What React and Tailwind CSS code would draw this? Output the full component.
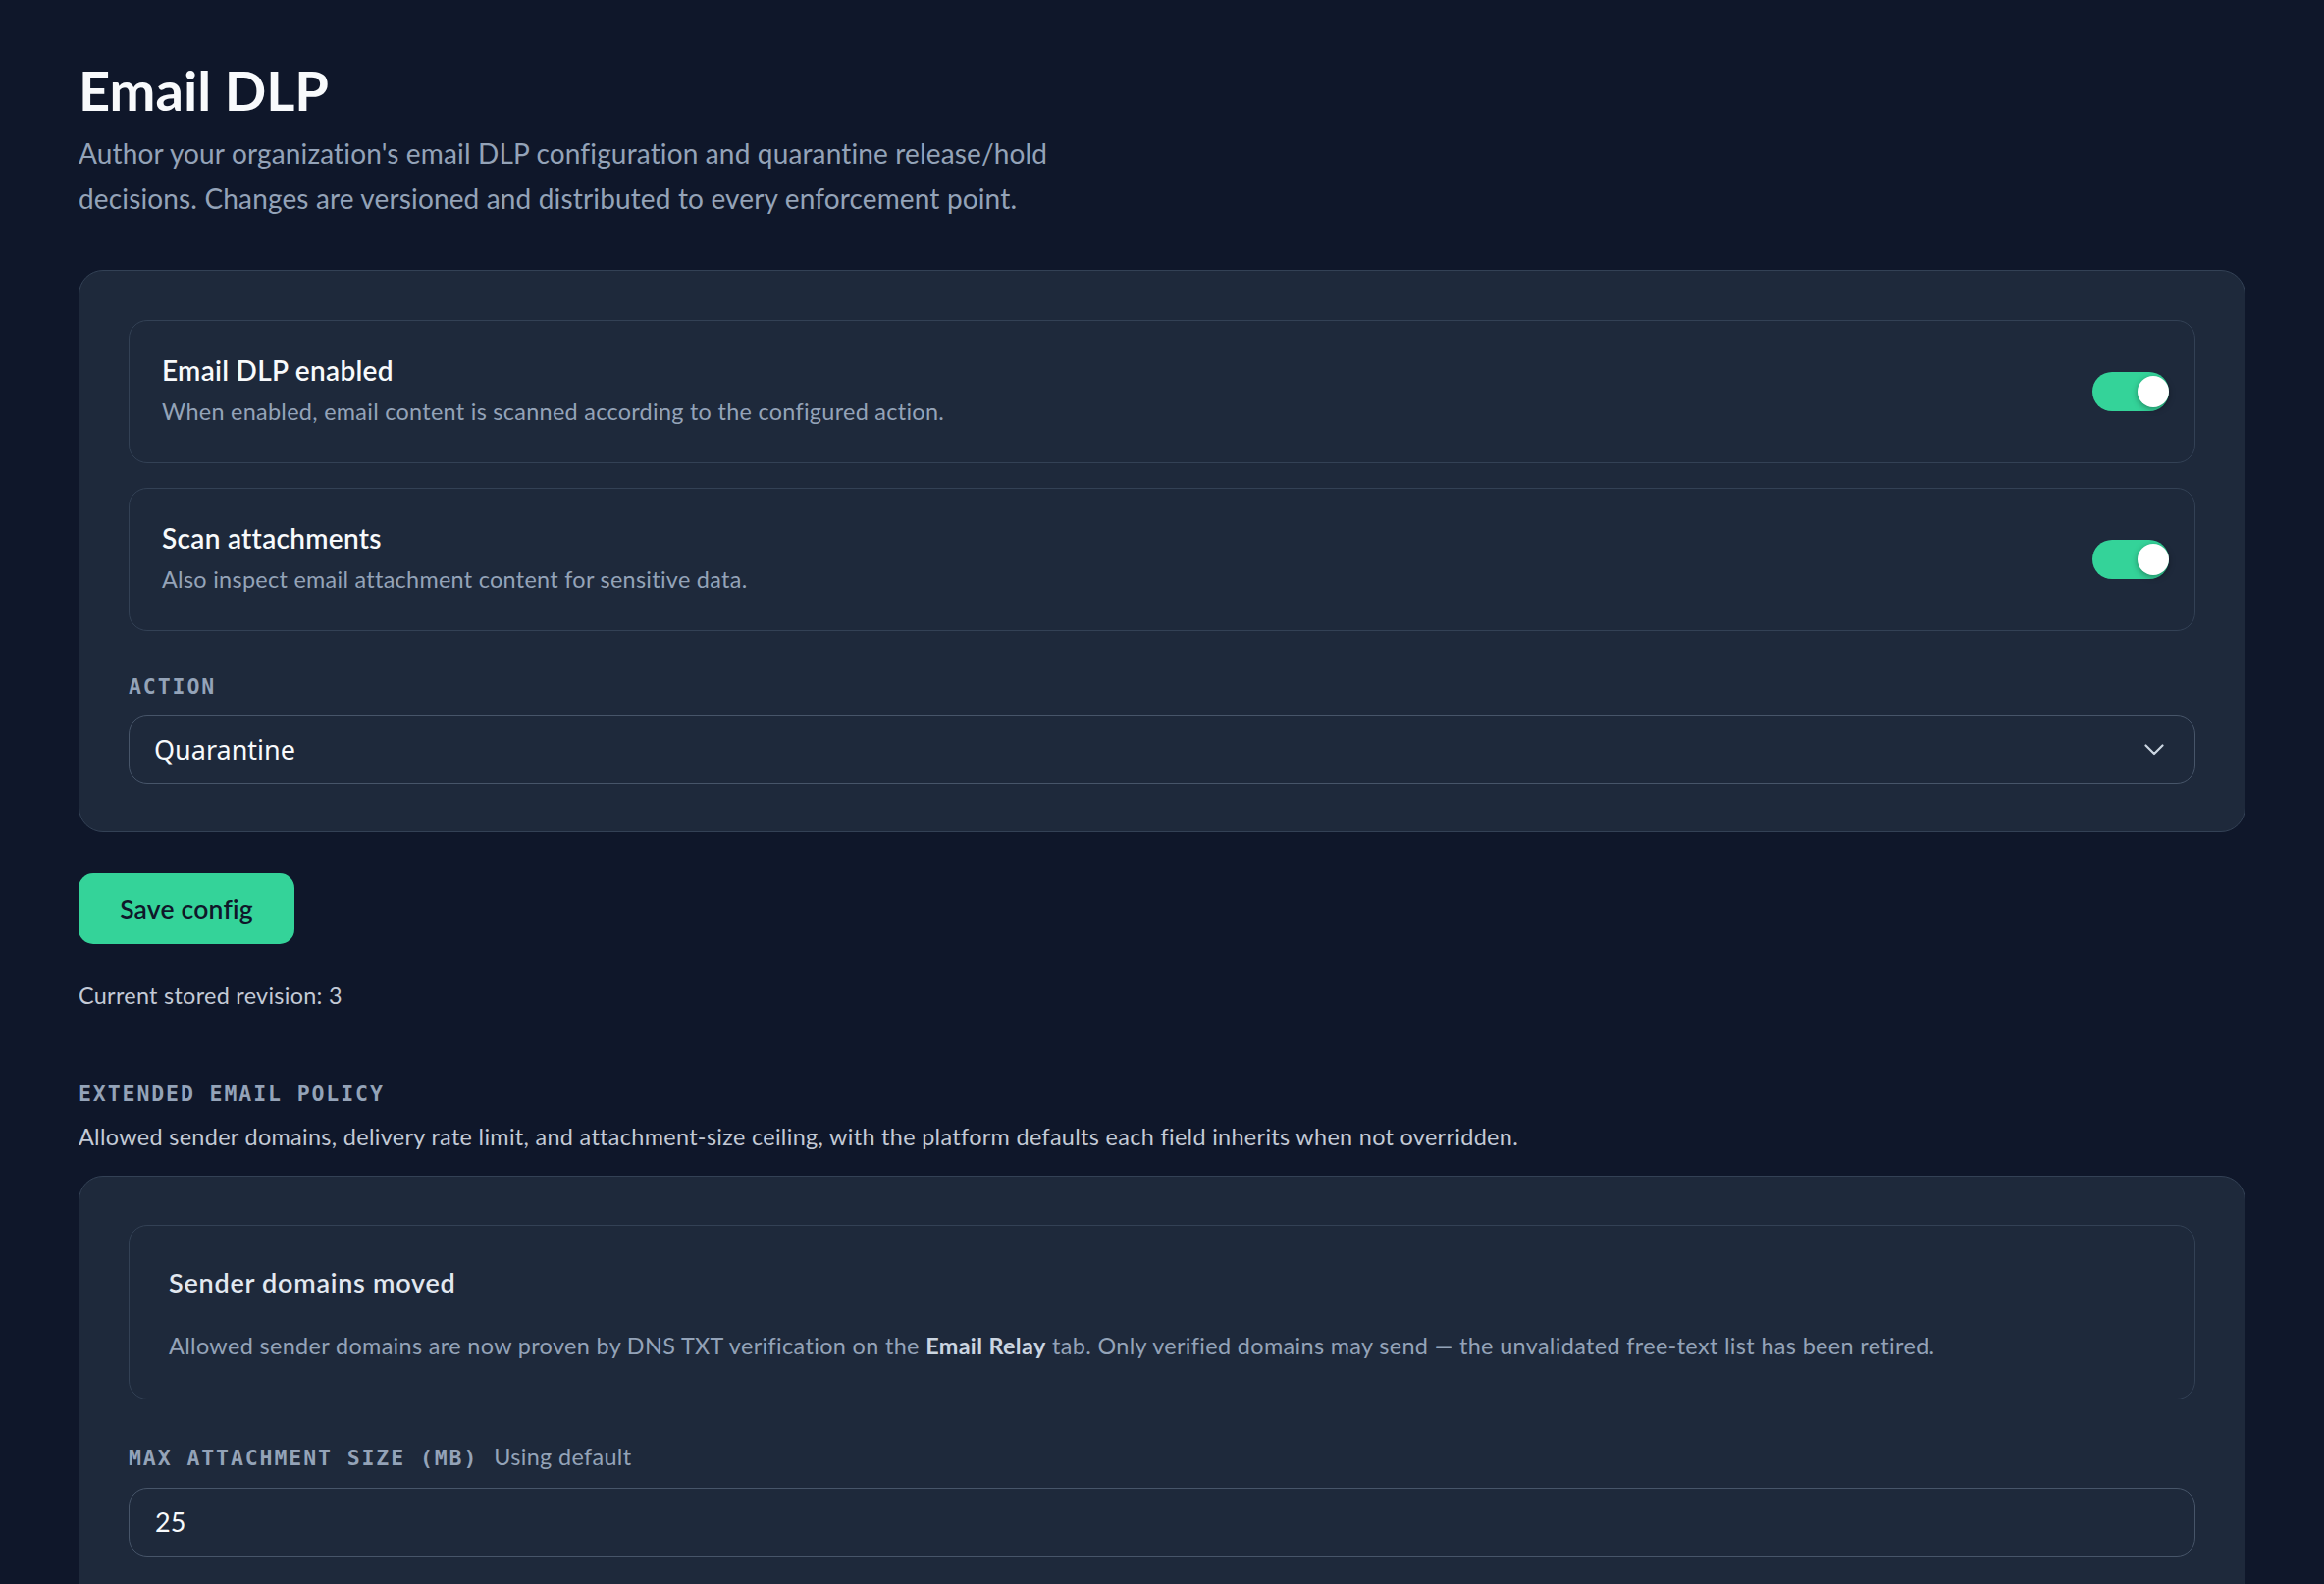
import React from "react";

function Toggle() {
  return (
    <div className="relative h-[40px] w-[78px] shrink-0 rounded-full bg-[#34d399]">
      <span className="absolute right-0 top-[4px] h-[32px] w-[32px] rounded-full bg-white shadow-[0_2px_6px_rgba(0,0,0,0.35)]" />
    </div>
  );
}

function SettingRow({ title, desc }) {
  return (
    <div className="flex items-center justify-between rounded-[19px] border border-[#334155] bg-[#1e293b] pl-[33px] pr-[26px]">
      <div className="flex flex-col pt-[29px] pb-[34px]">
        <div className="text-[28px] font-semibold leading-[42px] tracking-[0.3px] text-[#f8fafc]">{title}</div>
        <div className="mt-[4px] text-[23.4px] leading-[35px] tracking-[0.3px] text-[#94a3b8]">{desc}</div>
      </div>
      <Toggle />
    </div>
  );
}

function FieldLabel({ children, extra }) {
  return (
    <div className="flex items-baseline gap-[16px]">
      <span className="font-['DejaVu_Sans_Mono',monospace] text-[21.5px] font-bold uppercase leading-[28px] tracking-[1.9px] text-[#94a3b8]">
        {children}
      </span>
      {extra && (
        <span className="text-[23.4px] leading-[28px] tracking-[0.35px] text-[#94a3b8]">{extra}</span>
      )}
    </div>
  );
}

export default function App() {
  return (
    <div className="min-h-screen bg-[#0f172a] px-[80px] pt-[61px] pb-[80px] font-['Lato',sans-serif]">
      <h1 className="text-[56px] font-bold leading-[62px] text-[#f8fafc]">Email DLP</h1>
      <p className="mt-[11px] max-w-[1060px] text-[28px] leading-[45.7px] tracking-[0.15px] text-[#94a3b8]">
        Author your organization's email DLP configuration and quarantine release/hold decisions. Changes are
        versioned and distributed to every enforcement point.
      </p>

      {/* Core config card */}
      <div className="mt-[50px] rounded-[25px] border border-[#334155] bg-[#1e293b] px-[50px] pt-[50px] pb-[48px]">
        <div className="flex flex-col gap-[25px]">
          <SettingRow
            title="Email DLP enabled"
            desc="When enabled, email content is scanned according to the configured action."
          />
          <SettingRow title="Scan attachments" desc="Also inspect email attachment content for sensitive data." />
        </div>
        <div className="mt-[43px]">
          <FieldLabel>Action</FieldLabel>
          <div className="mt-[15px] flex h-[70px] items-center justify-between rounded-[19px] border border-[#475569] bg-[#1e293b] pl-[25px] pr-[31px]">
            <span className="font-['Noto_Sans',sans-serif] text-[27px] text-[#f8fafc]">Quarantine</span>
            <svg width="20" height="12" viewBox="0 0 20 12" fill="none">
              <polyline
                points="1.5,1.5 10,10 18.5,1.5"
                stroke="#cbd5e1"
                strokeWidth="2.2"
                strokeLinecap="round"
                strokeLinejoin="round"
              />
            </svg>
          </div>
        </div>
      </div>

      <button className="mt-[42px] flex h-[72px] w-[220px] items-center justify-center rounded-[15px] bg-[#34d399] text-[26.5px] font-semibold tracking-[0.2px] text-[#0f172a]">
        Save config
      </button>

      <p className="mt-[36px] text-[23.4px] leading-[33px] tracking-[0.3px] text-[#c3cad6]">
        Current stored revision: 3
      </p>

      {/* Extended policy */}
      <div className="mt-[70px] font-['DejaVu_Sans_Mono',monospace] text-[21.5px] font-bold uppercase leading-[28px] tracking-[1.9px] text-[#94a3b8]">
        Extended email policy
      </div>
      <p className="mt-[12px] text-[23.4px] leading-[35px] tracking-[0.33px] text-[#c3cad6]">
        Allowed sender domains, delivery rate limit, and attachment-size ceiling, with the platform defaults each
        field inherits when not overridden.
      </p>

      <div className="mt-[22px] rounded-[25px] border border-[#334155] bg-[#1e293b] px-[50px] pt-[49px] pb-[50px]">
        <div className="rounded-[19px] border border-[#334155] bg-[#1e293b] pl-[40px] pr-[39px] pt-[39px] pb-[37px]">
          <div className="text-[27px] font-semibold leading-[37.5px] tracking-[0.75px] text-[#e2e8f0]">
            Sender domains moved
          </div>
          <p className="mt-[29px] text-[23.4px] leading-[33px] tracking-[0.36px] text-[#94a3b8]">
            Allowed sender domains are now proven by DNS TXT verification on the{" "}
            <strong className="font-bold text-[#cbd5e1]">Email Relay</strong> tab. Only verified domains may send —
            the unvalidated free-text list has been retired.
          </p>
        </div>
        <div className="mt-[44px]">
          <FieldLabel extra="Using default">Max attachment size (MB)</FieldLabel>
          <div className="mt-[16px] flex h-[70px] items-center rounded-[19px] border border-[#475569] bg-[#1e293b] pl-[26px]">
            <span className="text-[27px] text-[#f8fafc]">25</span>
          </div>
        </div>
      </div>
    </div>
  );
}
